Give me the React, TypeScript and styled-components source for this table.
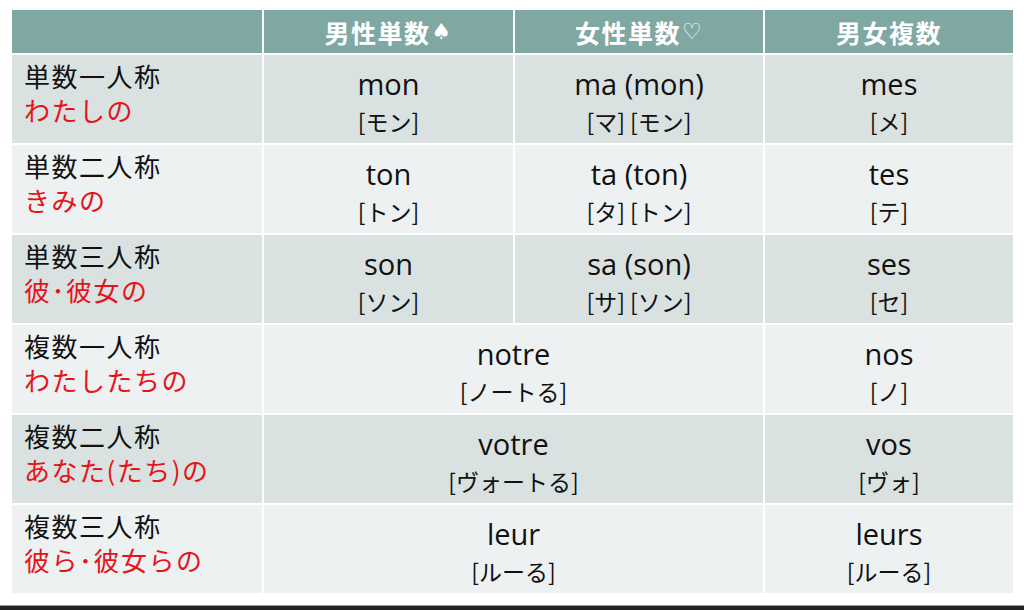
import React from "react";
import styled, { createGlobalStyle } from "styled-components";

const GlobalStyle = createGlobalStyle`
  html, body {
    margin: 0;
    padding: 0;
    background: #fff;
  }
  body {
    font-family: "Noto Sans CJK JP", "Noto Sans", sans-serif;
    color: #111;
  }
`;

const Page = styled.div`
  width: 1024px;
  height: 610px;
  display: flex;
  flex-direction: column;
  overflow: hidden;
`;

const Stage = styled.div`
  flex: 1;
  padding: 10px 11px 0 12px;
`;

const Table = styled.div`
  display: grid;
  grid-template-columns: 250px 249px 248px 248px;
  grid-template-rows: 43px repeat(6, 88px);
  column-gap: 2px;
  row-gap: 2px;
  background: #fff;
  width: 1001px;
`;

const HeadCell = styled.div`
  background: #7fa8a3;
  color: #fff;
  font-weight: 700;
  font-size: 25px;
  letter-spacing: 1.5px;
  display: flex;
  align-items: center;
  justify-content: center;
  margin-bottom: 1px;
  height: 43px;
`;

const Suit = styled.span`
  font-family: "DejaVu Sans", sans-serif;
  font-size: 22px;
  font-weight: 400;
  margin-left: 1px;
`;

const Cell = styled.div<{ $dark: boolean; $span?: number }>`
  background: ${(p) => (p.$dark ? "#d9e2e1" : "#eef1f1")};
  grid-column: ${(p) => (p.$span ? `span ${p.$span}` : "auto")};
`;

const LabelCell = styled(Cell)`
  padding: 4px 0 0 12px;
  display: flex;
  flex-direction: column;
  font-size: 26px;
  font-weight: 400;
  line-height: 34px;
  letter-spacing: 1.5px;
`;

const Person = styled.span`
  color: #111;
`;

const Meaning = styled.span`
  color: #e3151b;
`;

const FormCell = styled(Cell)`
  display: flex;
  flex-direction: column;
  align-items: center;
  justify-content: center;
  padding-top: 4px;
`;

const Word = styled.span`
  font-family: "Open Sans", "Noto Sans", "Noto Sans CJK JP", sans-serif;
  font-size: 29px;
  line-height: 40px;
  color: #111;
`;

const Reading = styled.span`
  font-size: 23px;
  line-height: 34px;
  color: #111;
`;

const BottomBar = styled.div`
  height: 4px;
  background: #232323;
  border-top: 1px solid #9a9a9a;
`;

type Form = { word: string; reading: string; span?: number };
type Row = { person: string; meaning: string; forms: Form[] };

const rows: Row[] = [
  {
    person: "単数一人称",
    meaning: "わたしの",
    forms: [
      { word: "mon", reading: "[モン]" },
      { word: "ma (mon)", reading: "[マ] [モン]" },
      { word: "mes", reading: "[メ]" },
    ],
  },
  {
    person: "単数二人称",
    meaning: "きみの",
    forms: [
      { word: "ton", reading: "[トン]" },
      { word: "ta (ton)", reading: "[タ] [トン]" },
      { word: "tes", reading: "[テ]" },
    ],
  },
  {
    person: "単数三人称",
    meaning: "彼･彼女の",
    forms: [
      { word: "son", reading: "[ソン]" },
      { word: "sa (son)", reading: "[サ] [ソン]" },
      { word: "ses", reading: "[セ]" },
    ],
  },
  {
    person: "複数一人称",
    meaning: "わたしたちの",
    forms: [
      { word: "notre", reading: "[ノートる]", span: 2 },
      { word: "nos", reading: "[ノ]" },
    ],
  },
  {
    person: "複数二人称",
    meaning: "あなた(たち)の",
    forms: [
      { word: "votre", reading: "[ヴォートる]", span: 2 },
      { word: "vos", reading: "[ヴォ]" },
    ],
  },
  {
    person: "複数三人称",
    meaning: "彼ら･彼女らの",
    forms: [
      { word: "leur", reading: "[ルーる]", span: 2 },
      { word: "leurs", reading: "[ルーる]" },
    ],
  },
];

const App = () => {
  return (
    <Page>
      <GlobalStyle />
      <Stage>
        <Table>
          <HeadCell />
          <HeadCell>
            男性単数<Suit>♠</Suit>
          </HeadCell>
          <HeadCell>
            女性単数<Suit>♡</Suit>
          </HeadCell>
          <HeadCell>男女複数</HeadCell>
          {rows.map((row, i) => {
            const dark = i % 2 === 0;
            return (
              <React.Fragment key={row.person}>
                <LabelCell $dark={dark}>
                  <Person>{row.person}</Person>
                  <Meaning>{row.meaning}</Meaning>
                </LabelCell>
                {row.forms.map((f) => (
                  <FormCell key={f.word} $dark={dark} $span={f.span}>
                    <Word>{f.word}</Word>
                    <Reading>{f.reading}</Reading>
                  </FormCell>
                ))}
              </React.Fragment>
            );
          })}
        </Table>
      </Stage>
      <BottomBar />
    </Page>
  );
};

export default App;
